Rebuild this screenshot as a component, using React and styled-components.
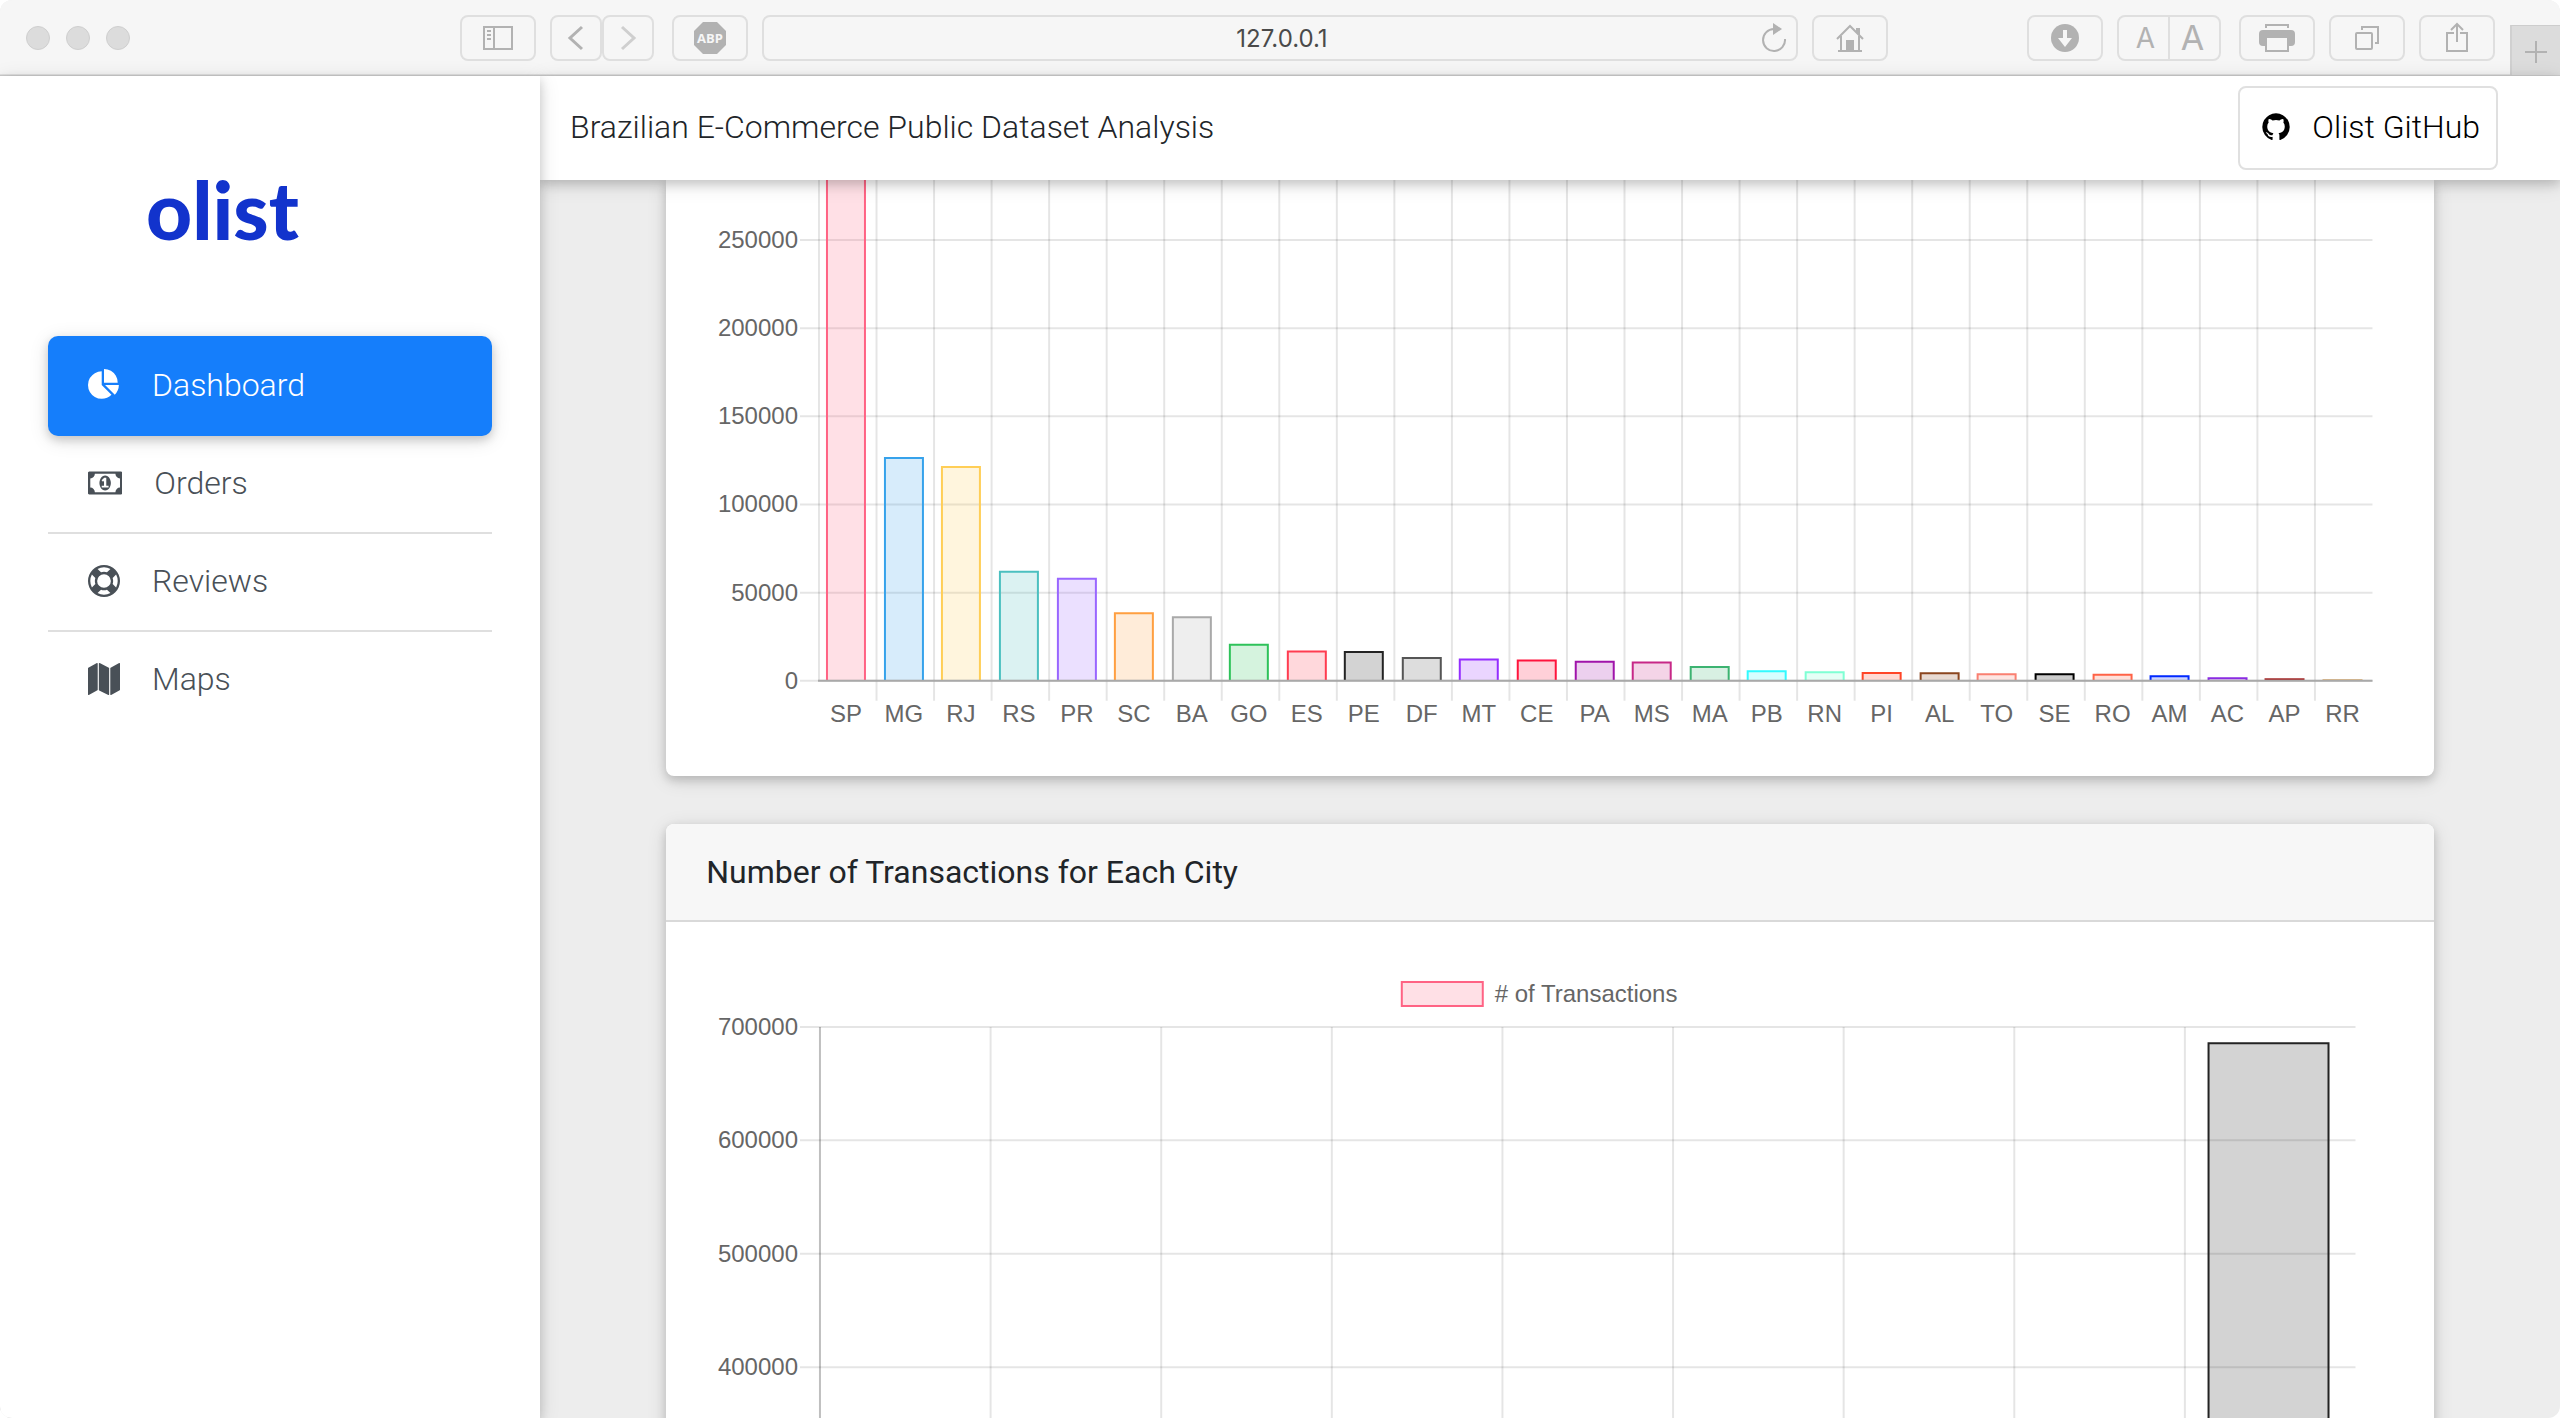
import React from "react";
import styled, { createGlobalStyle } from "styled-components";

const GlobalStyle = createGlobalStyle`
  *, *::before, *::after { box-sizing: border-box; }
  body {
    margin: 0;
    background: #fff;
    font-family: Roboto, "Liberation Sans", sans-serif;
    font-weight: 300;
    font-size: 32px;
    line-height: 48px;
    color: #212529;
  }
  button, input { font: inherit; color: inherit; }
  a { color: inherit; text-decoration: none; }
`;

const shadow = "0 4px 10px rgba(0, 0, 0, 0.16), 0 4px 20px rgba(0, 0, 0, 0.12)";

const Window = styled.div`
  display: flex;
  flex-direction: column;
  height: 100vh;
  overflow: hidden;
  border-radius: 12px;
  background: #ededed;
`;

/* ---------- browser toolbar ---------- */

const Toolbar = styled.div`
  flex: none;
  display: flex;
  align-items: center;
  gap: 14px;
  height: 76px;
  padding-left: 26px;
  background: #f6f6f6;
  border-bottom: 1px solid #cdcdcd;
  box-shadow: inset 0 -1px 0 #e2e2e2;
`;

const Lights = styled.div`
  display: flex;
  gap: 16px;
  margin-right: 316px;
`;

const Light = styled.span`
  width: 24px;
  height: 24px;
  border-radius: 50%;
  border: 1px solid #cfcfcf;
  background: #dcdcdc;
`;

const ToolButton = styled.button`
  flex: none;
  display: flex;
  align-items: center;
  justify-content: center;
  width: ${(p) => (p.$half ? "52px" : "76px")};
  height: 46px;
  padding: 0;
  border: 2px solid #dfdfdf;
  border-radius: 8px;
  background: #f6f6f6;
  color: ${(p) => (p.$dim ? "#cfcfcf" : "#b2b2b2")};
  font-family: Inter, "Liberation Sans", sans-serif;
  font-size: ${(p) => (p.$large ? "34px" : "28px")};
  font-weight: 400;
  line-height: 40px;
`;

const ToolGroup = styled.div`
  display: flex;
  margin-right: ${(p) => (p.$spaced ? "4px" : "0")};
`;

const JoinedGroup = styled(ToolGroup)`
  ${ToolButton}:first-child {
    padding-left: 4px;
    border-right-width: 1px;
    border-radius: 8px 0 0 8px;
  }
  ${ToolButton}:last-child {
    padding-right: 4px;
    border-left-width: 1px;
    border-radius: 0 8px 8px 0;
  }
`;

const AddressBar = styled.div`
  flex: 1;
  min-width: 0;
  display: flex;
  align-items: center;
  height: 46px;
  padding: 0 4px 0 44px;
  border: 2px solid #dfdfdf;
  border-radius: 8px;
`;

const AddressInput = styled.input`
  flex: 1;
  min-width: 0;
  padding: 2px 0 0;
  border: 0;
  outline: 0;
  background: transparent;
  text-align: center;
  color: #4a4a4a;
  font-family: Inter, "Liberation Sans", sans-serif;
  font-size: 24px;
  font-weight: 400;
  line-height: 32px;
`;

const ReloadButton = styled.button`
  display: flex;
  padding: 0;
  border: 0;
  background: transparent;
  color: #b2b2b2;
`;

const RightTools = styled.div`
  align-self: stretch;
  display: flex;
  align-items: center;
  gap: 14px;
  margin-left: 125px;
`;

const NewTabButton = styled.button`
  align-self: flex-end;
  display: flex;
  align-items: center;
  justify-content: center;
  width: 50px;
  height: 50px;
  margin-left: 1px;
  padding: 0;
  border: 0;
  border-top: 1px solid #cdcdcd;
  border-left: 2px solid #d0d0d0;
  background: #dcdcdc;
  color: #b2b2b2;
`;

const Glyph = styled.svg`
  display: block;
  flex: none;
  width: 36px;
  height: 36px;
  fill: none;
  stroke: currentColor;
  stroke-width: 2;
`;

const Tool = ({ children }) => (
  <Glyph viewBox="-18 -18 36 36" aria-hidden="true">
    {children}
  </Glyph>
);

/* ---------- app layout ---------- */

const Shell = styled.div`
  flex: 1;
  min-height: 0;
  display: grid;
  grid-template-columns: 540px minmax(0, 1fr);
`;

const Sidebar = styled.aside`
  position: relative;
  z-index: 2;
  padding: 0 48px;
  background: #fff;
  box-shadow: ${shadow};
`;

const Logo = styled.a`
  display: flex;
  align-items: center;
  height: 260px;
  padding: 6px 0 0 98px;
  color: #1233cc;
  font-family: Lato, "Open Sans", sans-serif;
  font-size: 80px;
  font-weight: 900;
  line-height: 96px;
`;

const Nav = styled.nav`
  display: flex;
  flex-direction: column;
`;

const NavItem = styled.a`
  display: flex;
  align-items: center;
  gap: 32px;
  padding: 23px 40px 25px;
  border-bottom: 2px solid ${(p) => (p.$active ? "transparent" : "#dfdfdf")};
  color: ${(p) => (p.$active ? "#fff" : "#495057")};
  ${(p) =>
    p.$active &&
    `
    padding-top: 25px;
    border-radius: 10px;
    background: #157efb;
    box-shadow: ${shadow};
  `}
  &:last-child {
    border-bottom-color: transparent;
  }
`;

const NavIcon = styled.svg`
  display: block;
  flex: none;
  height: 32px;
  width: auto;
  fill: currentColor;
`;

const Main = styled.div`
  display: flex;
  flex-direction: column;
  min-height: 0;
`;

const Header = styled.header`
  position: relative;
  z-index: 1;
  flex: none;
  display: flex;
  align-items: center;
  justify-content: space-between;
  height: 104px;
  padding: 0 62px 0 30px;
  background: #fff;
  box-shadow: ${shadow};
`;

const Title = styled.span`
  padding-bottom: 2px;
  font-size: 32px;
`;

const GithubLink = styled.a`
  display: flex;
  align-items: center;
  gap: 20px;
  height: 84px;
  padding: 0 16px 2px 20px;
  border: 2px solid #e0e0e0;
  border-radius: 8px;
  color: #000;
`;

const Content = styled.main`
  flex: 1;
  min-height: 0;
  overflow: hidden;
`;

const Cards = styled.div`
  display: flex;
  flex-direction: column;
  gap: 48px;
  width: 87.5%;
  margin: 0 auto;
`;

const Card = styled.section`
  border-radius: ${(p) => (p.$continued ? "0 0 8px 8px" : "8px")};
  background: #fff;
  box-shadow: ${shadow};
`;

const CardHeader = styled.h2`
  margin: 0;
  padding: 24px 40px;
  border-bottom: 2px solid #d9d9d9;
  border-radius: 8px 8px 0 0;
  background: #f7f7f7;
  font-size: 32px;
  font-weight: 400;
  line-height: 48px;
`;

const CardBody = styled.div`
  padding: ${(p) => (p.$continued ? "0 40px 40px" : "40px")};
`;

const ChartSvg = styled.svg`
  display: block;
  width: 100%;
  height: auto;
  overflow: hidden;
`;

const ChartText = styled.text`
  fill: #666;
  font-family: "Liberation Sans", Arial, sans-serif;
  font-size: 24px;
  font-weight: 400;
`;

/* ---------- data ---------- */

const STATES = [
  ["SP", 396000, "255,99,132"],
  ["MG", 126400, "54,162,235"],
  ["RJ", 121300, "255,206,86"],
  ["RS", 61900, "75,192,192"],
  ["PR", 57900, "153,102,255"],
  ["SC", 38300, "255,159,64"],
  ["BA", 36000, "169,169,169"],
  ["GO", 20400, "46,194,90"],
  ["ES", 16700, "255,60,80"],
  ["PE", 16300, "35,35,35"],
  ["DF", 12900, "85,85,85"],
  ["MT", 12100, "148,45,255"],
  ["CE", 11600, "255,20,60"],
  ["PA", 10800, "160,20,170"],
  ["MS", 10400, "199,40,135"],
  ["MA", 7900, "60,179,113"],
  ["PB", 5500, "50,250,255"],
  ["RN", 4900, "127,255,212"],
  ["PI", 4500, "255,69,40"],
  ["AL", 4250, "139,69,30"],
  ["TO", 3750, "250,128,114"],
  ["SE", 3750, "0,0,0"],
  ["RO", 3500, "255,99,71"],
  ["AM", 2600, "0,40,255"],
  ["AC", 1500, "138,43,226"],
  ["AP", 950, "165,42,42"],
  ["RR", 550, "222,184,135"],
].map(([label, value, rgb]) => ({ label, value, rgb }));

const CITIES = [0, 0, 0, 0, 0, 0, 0, 0, 685600].map((value) => ({
  value,
  rgb: "35,35,35",
}));

/* Bar chart on a 1688-unit wide canvas: value axis on the left, categories below.
   The plot may run past its highest tick, up to plotTop. */
function BarChart({
  title,
  data,
  height,
  left,
  right,
  top,
  bottom,
  plotTop = top,
  max,
  step,
  barWidth,
  zeroAxis,
  legend,
}) {
  const slot = (right - left) / data.length;
  const y = (v) => bottom - (v / max) * (bottom - top);
  const ticks = [];
  for (let v = 0; v <= max; v += step) ticks.push(v);
  return (
    <ChartSvg viewBox={`0 0 1688 ${height}`} role="img" aria-label={title}>
      {legend && (
        <g>
          <rect x="696" y="20" width="81" height="24" fill="rgba(255,99,132,0.2)" stroke="rgb(255,99,132)" strokeWidth="2" />
          <ChartText x="789" y="40">
            {legend}
          </ChartText>
        </g>
      )}
      {ticks.map((v) => (
        <g key={v}>
          <line x1="94" x2={right} y1={y(v)} y2={y(v)} stroke="rgba(0,0,0,0.1)" strokeWidth="2" />
          <ChartText x="92" y={y(v) + 8} textAnchor="end">
            {v}
          </ChartText>
        </g>
      ))}
      {data.map((d, i) => (
        <line
          key={i}
          x1={left + i * slot}
          x2={left + i * slot}
          y1={plotTop}
          y2={i === 0 ? bottom : bottom + 20}
          stroke={i === 0 && zeroAxis ? "rgba(0,0,0,0.25)" : "rgba(0,0,0,0.1)"}
          strokeWidth="2"
        />
      ))}
      {data.map((d, i) => {
        const cx = Math.round(left + (i + 0.5) * slot - 1.5);
        const x1 = cx - barWidth / 2 + 1;
        const x2 = cx + barWidth / 2 - 1;
        return (
          <g key={i}>
            {d.value > 0 && (
              <path
                d={`M${x1} ${bottom}V${y(d.value)}H${x2}V${bottom}`}
                fill={`rgba(${d.rgb},0.2)`}
                stroke={`rgb(${d.rgb})`}
                strokeWidth="2"
              />
            )}
            {d.label && (
              <ChartText x={cx} y={bottom + 41} textAnchor="middle">
                {d.label}
              </ChartText>
            )}
          </g>
        );
      })}
      <line x1={left - 1} x2={right} y1={bottom} y2={bottom} stroke="#a9a9a9" strokeWidth="2" />
    </ChartSvg>
  );
}

const NAV = [
  {
    label: "Dashboard",
    box: "0 0 1792 1792",
    d: "M768 890l546 546q-106 108-247.5 168t-298.5 60q-209 0-385.5-103t-279.5-279.5-103-385.5 103-385.5 279.5-279.5 385.5-103v762zm187 6h773q0 157-60 298.5t-168 247.5zm709-128h-768v-768q209 0 385.5 103t279.5 279.5 103 385.5z",
  },
  {
    label: "Orders",
    box: "0 0 1920 1792",
    d: "M768 1152h384v-96h-128v-448h-114l-148 137 77 80q42-37 55-57h2v288h-128v96zm512-256q0 70-21 142t-59.5 134-101.5 101-138 39-138-39-101.5-101-59.5-134-21-142 21-142 59.5-134 101.5-101 138-39 138 39 101.5 101 59.5 134 21 142zm512 256v-512q-106 0-181-75t-75-181h-1152q0 106-75 181t-181 75v512q106 0 181 75t75 181h1152q0-106 75-181t181-75zm128-832v1152q0 26-19 45t-45 19h-1792q-26 0-45-19t-19-45v-1152q0-26 19-45t45-19h1792q26 0 45 19t19 45z",
  },
  {
    label: "Reviews",
    box: "0 0 1792 1792",
    d: "M896 0q182 0 348 71t286 191 191 286 71 348-71 348-191 286-286 191-348 71-348-71-286-191-191-286-71-348 71-348 191-286 286-191 348-71zm0 128q-190 0-361 90l194 194q82-28 167-28t167 28l194-194q-171-90-361-90zm-678 1129l194-194q-28-82-28-167t28-167l-194-194q-90 171-90 361t90 361zm678 407q190 0 361-90l-194-194q-82 28-167 28t-167-28l-194 194q171 90 361 90zm0-384q159 0 271.5-112.5t112.5-271.5-112.5-271.5-271.5-112.5-271.5 112.5-112.5 271.5 112.5 271.5 271.5 112.5zm484-217l194 194q90-171 90-361t-90-361l-194 194q28 82 28 167t-28 167z",
  },
  {
    label: "Maps",
    box: "0 0 1792 1792",
    d: "M512 0q13 0 22.5 9.5t9.5 22.5v1472q0 20-17 28l-480 256q-7 4-15 4-13 0-22.5-9.5t-9.5-22.5v-1472q0-20 17-28l480-256q7-4 15-4zm1248 0q13 0 22.5 9.5t9.5 22.5v1472q0 20-17 28l-480 256q-7 4-15 4-13 0-22.5-9.5t-9.5-22.5v-1472q0-20 17-28l480-256q7-4 15-4zm-1120 0q8 0 15 3l512 256q17 10 17 29v1472q0 13-9.5 22.5t-22.5 9.5q-8 0-15-3l-512-256q-17-10-17-29v-1472q0-13 9.5-22.5t22.5-9.5z",
  },
];

const GITHUB =
  "M896 128q209 0 385.5 103t279.5 279.5 103 385.5q0 251-146.5 451.5t-378.5 277.5q-27 5-40-7t-13-30q0-3 .5-76.5t.5-134.5q0-97-52-142 57-6 102.5-18t94-39 81-66.5 53-105 20.5-150.5q0-119-79-206 37-91-8-204-28-9-81 11t-92 44l-38 24q-93-26-192-26t-192 26q-16-11-42.5-27t-83.5-38.5-85-13.5q-45 113-8 204-79 87-79 206 0 85 20.5 150t52.5 105 80.5 67 94 39 102.5 18q-39 36-49 103-21 10-45 15t-57 5-65.5-21.5-55.5-62.5q-19-32-48.5-52t-49.5-24l-20-3q-21 0-29 4.5t-5 11.5 9 14 13 12l7 5q22 10 43.5 38t31.5 51l10 23q13 38 44 61.5t67 30 69.5 7 55.5-3.5l23-4q0 38 .5 88.5t.5 54.5q0 18-13 30t-40 7q-232-77-378.5-277.5t-146.5-451.5q0-209 103-385.5t279.5-279.5 385.5-103z";

const AbpText = styled.text`
  fill: #f6f6f6;
  stroke: none;
  font-family: "Open Sans", sans-serif;
  font-size: 13px;
  font-weight: 700;
`;

function BrowserToolbar() {
  return (
    <Toolbar>
      <Lights>
        <Light />
        <Light />
        <Light />
      </Lights>
      <ToolButton aria-label="Show sidebar">
        <Tool>
          <rect x="-14" y="-11" width="28" height="22" />
          <path d="M-4 -11V11M-11 -7H-7M-11 -3H-7M-11 1H-7" />
        </Tool>
      </ToolButton>
      <ToolGroup $spaced>
        <ToolButton $half aria-label="Back">
          <Tool>
            <path d="M6 -11L-6 0L6 11" strokeWidth="3" />
          </Tool>
        </ToolButton>
        <ToolButton $half $dim aria-label="Forward">
          <Tool>
            <path d="M-6 -11L6 0L-6 11" strokeWidth="3" />
          </Tool>
        </ToolButton>
      </ToolGroup>
      <ToolButton aria-label="Adblock Plus">
        <Tool>
          <path d="M-7 -16H7L16 -7V7L7 16H-7L-16 7V-7Z" fill="currentColor" stroke="none" />
          <AbpText x="0" y="5" textAnchor="middle">
            ABP
          </AbpText>
        </Tool>
      </ToolButton>
      <AddressBar>
        <AddressInput aria-label="Address" defaultValue="127.0.0.1" />
        <ReloadButton aria-label="Reload">
          <Tool>
            <path d="M0 -9A11 11 0 1 0 11 1" />
            <path d="M-1 -15V-3L8 -9Z" fill="currentColor" stroke="none" />
          </Tool>
        </ReloadButton>
      </AddressBar>
      <ToolButton aria-label="Home">
        <Tool>
          <path d="M-13 1L0 -12L13 1" />
          <path d="M-9 -2V13M9 -2V13M-12 13H12" />
          <path d="M6 -10H10V-2L6 -6ZM-4 2H4V13H-4Z" fill="currentColor" stroke="none" />
        </Tool>
      </ToolButton>
      <RightTools>
        <ToolButton aria-label="Downloads">
          <Tool>
            <circle r="14" fill="currentColor" stroke="none" />
            <path d="M-2 -8H2V0H7L0 9L-7 0H-2Z" fill="#f6f6f6" stroke="none" />
          </Tool>
        </ToolButton>
        <JoinedGroup $spaced>
          <ToolButton $half aria-label="Smaller text">
            A
          </ToolButton>
          <ToolButton $half $large aria-label="Larger text">
            A
          </ToolButton>
        </JoinedGroup>
        <ToolButton aria-label="Print">
          <Tool>
            <path d="M-11 -10V-13H11V-10" />
            <rect x="-18" y="-8" width="36" height="16" rx="4" fill="currentColor" stroke="none" />
            <rect x="-11" y="-1" width="22" height="14" fill="#f6f6f6" />
          </Tool>
        </ToolButton>
        <ToolButton aria-label="Show all tabs">
          <Tool>
            <rect x="-11" y="-5" width="16" height="16" rx="1" />
            <path d="M-5 -8V-11H11V5H8" />
          </Tool>
        </ToolButton>
        <ToolButton aria-label="Share">
          <Tool>
            <path d="M-3 -5H-10V13H10V-5H3M0 4V-14M-6 -8L0 -14L6 -8" />
          </Tool>
        </ToolButton>
        <NewTabButton aria-label="New tab">
          <Tool>
            <path d="M-11 1H11M0 -10V12" />
          </Tool>
        </NewTabButton>
      </RightTools>
    </Toolbar>
  );
}

export default function App() {
  return (
    <Window>
      <GlobalStyle />
      <BrowserToolbar />
      <Shell>
        <Sidebar>
          <Logo href="#">olist</Logo>
          <Nav>
            {NAV.map((item, i) => (
              <NavItem key={item.label} href="#" $active={i === 0}>
                <NavIcon viewBox={item.box} aria-hidden="true">
                  <path d={item.d} />
                </NavIcon>
                {item.label}
              </NavItem>
            ))}
          </Nav>
        </Sidebar>
        <Main>
          <Header>
            <Title>Brazilian E-Commerce Public Dataset Analysis</Title>
            <GithubLink href="#">
              <NavIcon viewBox="0 0 1792 1792" aria-hidden="true">
                <path d={GITHUB} />
              </NavIcon>
              Olist GitHub
            </GithubLink>
          </Header>
          <Content>
            <Cards>
              <Card $continued>
                <CardBody $continued>
                  <BarChart
                    title="Number of transactions for each state"
                    data={STATES}
                    height={556}
                    left={113}
                    right={1667}
                    top={60}
                    plotTop={0}
                    bottom={501}
                    max={250000}
                    step={50000}
                    barWidth={40}
                  />
                </CardBody>
              </Card>
              <Card>
                <CardHeader>Number of Transactions for Each City</CardHeader>
                <CardBody>
                  <BarChart
                    title="Number of transactions for each city"
                    legend="# of Transactions"
                    data={CITIES}
                    height={915}
                    left={114}
                    right={1650}
                    top={65}
                    bottom={859}
                    max={700000}
                    step={100000}
                    barWidth={122}
                    zeroAxis
                  />
                </CardBody>
              </Card>
            </Cards>
          </Content>
        </Main>
      </Shell>
    </Window>
  );
}
